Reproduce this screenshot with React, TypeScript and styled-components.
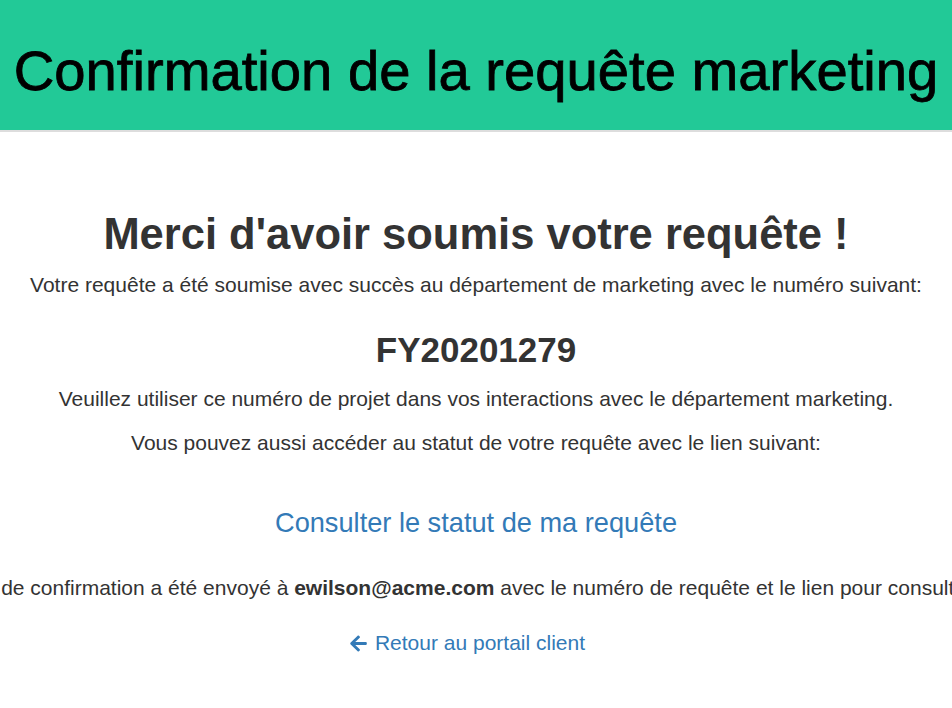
import React from "react";
import styled, { createGlobalStyle } from "styled-components";
import { FaArrowLeft } from "react-icons/fa";

const Global = createGlobalStyle`
  html, body { margin: 0; padding: 0; background: #fff; }
  body {
    font-family: "Liberation Sans", Arial, Helvetica, sans-serif;
    color: #333;
    overflow: hidden;
  }
`;

const Page = styled.div`
  width: 952px;
  overflow: hidden;
`;

const Header = styled.header`
  box-sizing: border-box;
  height: 132px;
  padding-top: 11px;
  background: #22c997;
  border-bottom: 2px solid #dddddd;
  display: flex;
  align-items: center;
  justify-content: center;
`;

const Title = styled.h1`
  margin: 0;
  font-size: 56.2px;
  font-weight: 400;
  color: #000;
  white-space: nowrap;
  -webkit-text-stroke: 0.8px #000;
`;

const Main = styled.main`
  display: flex;
  flex-direction: column;
  align-items: center;
  padding-top: 76px;
`;

const Thanks = styled.h2`
  margin: 0;
  font-size: 43.5px;
  font-weight: 700;
  color: #333;
  line-height: 52px;
  white-space: nowrap;
`;

const Line = styled.p<{ $top: number }>`
  margin: ${(p) => p.$top}px 0 0;
  font-size: 21px;
  line-height: 26px;
  color: #333;
  white-space: nowrap;
  display: flex;
  justify-content: center;
  width: 100%;
`;

const Code = styled.div`
  margin-top: 32px;
  font-size: 35px;
  font-weight: 700;
  line-height: 40px;
  color: #333;
`;

const StatusLink = styled.a`
  margin-top: 51px;
  font-size: 27.2px;
  line-height: 32px;
  color: #337ab7;
  text-decoration: none;
`;

const BackLink = styled.a`
  margin-top: 29px;
  padding-right: 18px;
  font-size: 21px;
  line-height: 26px;
  color: #337ab7;
  text-decoration: none;
  display: flex;
  align-items: center;
  gap: 7px;
`;

export default function App() {
  return (
    <Page>
      <Global />
      <Header>
        <Title>Confirmation de la requête marketing</Title>
      </Header>
      <Main>
        <Thanks>Merci d'avoir soumis votre requête !</Thanks>
        <Line $top={12}>
          <span>Votre requête a été soumise avec succès au département de marketing avec le numéro suivant:</span>
        </Line>
        <Code>FY20201279</Code>
        <Line $top={16}>
          <span>Veuillez utiliser ce numéro de projet dans vos interactions avec le département marketing.</span>
        </Line>
        <Line $top={18}>
          <span>Vous pouvez aussi accéder au statut de votre requête avec le lien suivant:</span>
        </Line>
        <StatusLink href="#">Consulter le statut de ma requête</StatusLink>
        <Line $top={36}>
          <span>
            Un courriel de confirmation a été envoyé à <b>ewilson@acme.com</b> avec le numéro de requête et le lien pour consulter le statut.
          </span>
        </Line>
        <BackLink href="#">
          <FaArrowLeft size={19} />
          Retour au portail client
        </BackLink>
      </Main>
    </Page>
  );
}
